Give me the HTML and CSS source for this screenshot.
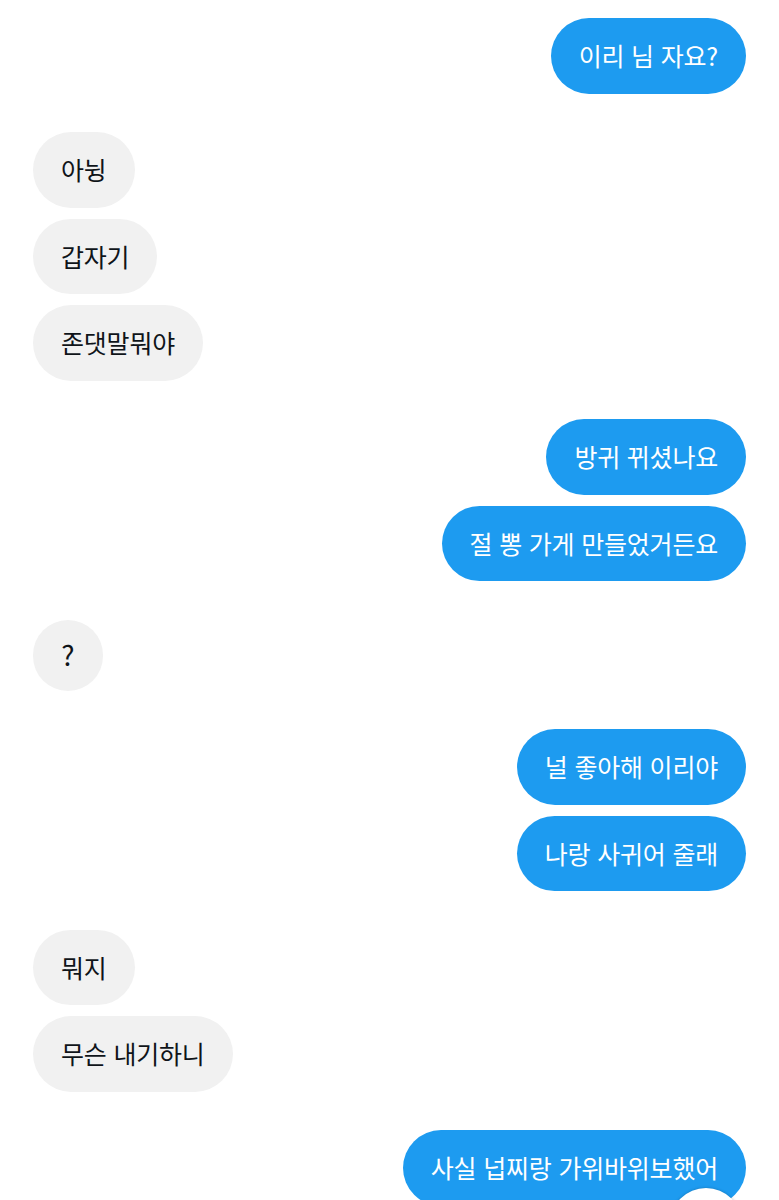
FILE: index.html
```html
<!DOCTYPE html>
<html lang="ko">
<head>
<meta charset="utf-8">
<link rel="stylesheet" href="styles.css">
</head>
<body>
<div class="chat">
  <div class="group out">
    <div class="bubble">이리 님 자요?</div>
  </div>
  <div class="group in">
    <div class="bubble">아뉭</div>
    <div class="bubble">갑자기</div>
    <div class="bubble">존댓말뭐야</div>
  </div>
  <div class="group out">
    <div class="bubble">방귀 뀌셨나요</div>
    <div class="bubble">절 뽕 가게 만들었거든요</div>
  </div>
  <div class="group in">
    <div class="bubble short">?</div>
  </div>
  <div class="group out">
    <div class="bubble">널 좋아해 이리야</div>
    <div class="bubble">나랑 사귀어 줄래</div>
  </div>
  <div class="group in">
    <div class="bubble">뭐지</div>
    <div class="bubble">무슨 내기하니</div>
  </div>
  <div class="group out">
    <div class="bubble">사실 넙찌랑 가위바위보했어</div>
  </div>
</div>
<div class="scroll-btn"></div>
</body>
</html>
```

FILE: styles.css
```css
html, body {
  margin: 0;
  padding: 0;
  background: #ffffff;
  height: 1200px;
  overflow: hidden;
}
body {
  font-family: "Noto Sans CJK KR", "Noto Sans", sans-serif;
  position: relative;
}
.chat {
  display: flex;
  flex-direction: column;
  gap: 38.5px;
  padding: 18px 33px 0 33px;
}
.group {
  display: flex;
  flex-direction: column;
  gap: 11px;
}
.group.out { align-items: flex-end; }
.group.in { align-items: flex-start; }
.bubble {
  font-size: 25px;
  line-height: 31.5px;
  padding: 22px 28px;
  border-radius: 38px;
  letter-spacing: -0.2px;
  white-space: nowrap;
}
.out .bubble {
  background: #1d9bf0;
  color: #ffffff;
}
.in .bubble {
  background: #f1f1f1;
  color: #0f1419;
}
.bubble.short {
  width: 70px;
  font-size: 28px;
  padding: 19.75px 0;
  text-align: center;
  letter-spacing: 0;
  box-sizing: border-box;
}
.scroll-btn {
  position: absolute;
  left: 670px;
  top: 1188px;
  width: 72px;
  height: 72px;
  border-radius: 50%;
  background: #ffffff;
  box-shadow: 0 0 3px rgba(0,0,0,0.25);
}
```
